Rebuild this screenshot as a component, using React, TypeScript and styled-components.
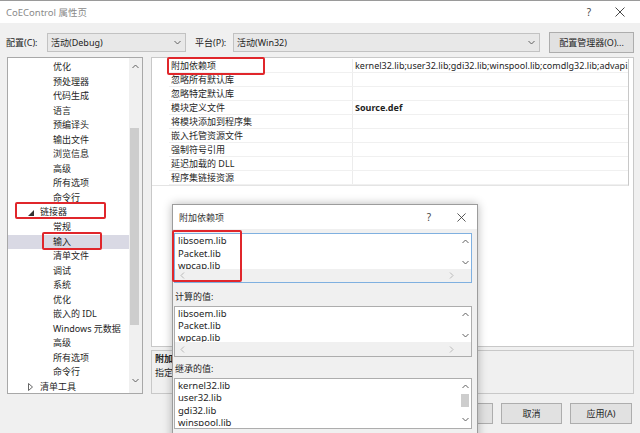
import styled, { createGlobalStyle } from 'styled-components'

const GlobalStyle = createGlobalStyle`
  html, body { margin: 0; padding: 0; background: #f0f0f0; }
  body {
    font-family: "Noto Sans", "Noto Sans CJK SC", sans-serif;
    color: #1e1e1e;
  }
  * { box-sizing: border-box; }
`

type TreeItem = { label: string; level: 1 | 2; expanded?: boolean; collapsed?: boolean; selected?: boolean; mark?: 'linker' | 'input' }

const treeItems: TreeItem[] = [
  { label: '优化', level: 2 },
  { label: '预处理器', level: 2 },
  { label: '代码生成', level: 2 },
  { label: '语言', level: 2 },
  { label: '预编译头', level: 2 },
  { label: '输出文件', level: 2 },
  { label: '浏览信息', level: 2 },
  { label: '高级', level: 2 },
  { label: '所有选项', level: 2 },
  { label: '命令行', level: 2 },
  { label: '链接器', level: 1, expanded: true, mark: 'linker' },
  { label: '常规', level: 2 },
  { label: '输入', level: 2, selected: true, mark: 'input' },
  { label: '清单文件', level: 2 },
  { label: '调试', level: 2 },
  { label: '系统', level: 2 },
  { label: '优化', level: 2 },
  { label: '嵌入的 IDL', level: 2 },
  { label: 'Windows 元数据', level: 2 },
  { label: '高级', level: 2 },
  { label: '所有选项', level: 2 },
  { label: '命令行', level: 2 },
  { label: '清单工具', level: 1, collapsed: true },
]

const gridRows: { name: string; value?: string; bold?: boolean; mark?: boolean }[] = [
  { name: '附加依赖项', value: 'kernel32.lib;user32.lib;gdi32.lib;winspool.lib;comdlg32.lib;advapi32.lib;shell32.lib;ole32.lib', mark: true },
  { name: '忽略所有默认库' },
  { name: '忽略特定默认库' },
  { name: '模块定义文件', value: 'Source.def', bold: true },
  { name: '将模块添加到程序集' },
  { name: '嵌入托管资源文件' },
  { name: '强制符号引用' },
  { name: '延迟加载的 DLL' },
  { name: '程序集链接资源' },
]

function Chevron({ dir, color = '#606060' }: { dir: 'up' | 'down' | 'left' | 'right'; color?: string }) {
  const pts = {
    up: '0.5,4 3.5,1 6.5,4',
    down: '0.5,1 3.5,4 6.5,1',
    left: '4,0.5 1,3.5 4,6.5',
    right: '1,0.5 4,3.5 1,6.5',
  }[dir]
  const vertical = dir === 'up' || dir === 'down'
  return (
    <svg width={vertical ? 7 : 5} height={vertical ? 5 : 7} viewBox={vertical ? '0 0 7 5' : '0 0 5 7'}>
      <polyline points={pts} fill="none" stroke={color} strokeWidth="1" />
    </svg>
  )
}

function CloseGlyph({ size = 10 }: { size?: number }) {
  return (
    <svg width={size} height={size} viewBox="0 0 10 10">
      <path d="M0.5 0.5 L9.5 9.5 M9.5 0.5 L0.5 9.5" stroke="#333" strokeWidth="0.9" fill="none" />
    </svg>
  )
}

export default function App() {
  return (
    <>
      <GlobalStyle />
      <Window>
        <TitleBar>
          <TitleText>CoEControl 属性页</TitleText>
          <TitleButtons>
            <HelpGlyph>?</HelpGlyph>
            <CloseGlyph />
          </TitleButtons>
        </TitleBar>

        <ConfigRow>
          <FieldLabel $width={41}>配置(C):</FieldLabel>
          <Combo $width={139}>
            <span>活动(Debug)</span>
            <Chevron dir="down" />
          </Combo>
          <FieldLabel $width={38} $gap={9}>平台(P):</FieldLabel>
          <Combo $grow>
            <span>活动(Win32)</span>
            <Chevron dir="down" />
          </Combo>
          <PushButton $width={85} $gap={9}>配置管理器(O)...</PushButton>
        </ConfigRow>

        <Main>
          <Tree>
            <TreeList>
              {treeItems.map((item, i) => (
                <TreeRow key={i} $selected={item.selected}>
                  <TreeRowInner $level={item.level}>
                    {item.expanded && (
                      <Twisty>
                        <svg width="6" height="6" viewBox="0 0 6 6"><polygon points="6,0 6,6 0,6" fill="#333" /></svg>
                      </Twisty>
                    )}
                    {item.collapsed && (
                      <Twisty>
                        <svg width="5" height="8" viewBox="0 0 5 8"><polygon points="0.5,0.5 4.5,4 0.5,7.5" fill="none" stroke="#555" strokeWidth="0.9" /></svg>
                      </Twisty>
                    )}
                    {item.label}
                  </TreeRowInner>
                  {item.mark === 'linker' && <RedMark $left={7} $top={-3} $width={91} $height={17} />}
                  {item.mark === 'input' && <RedMark $left={34} $top={-3} $width={60} $height={18} />}
                </TreeRow>
              ))}
            </TreeList>
            <VScroll $thumbTop={70} $thumbHeight={197}>
              <Chevron dir="up" />
              <Chevron dir="down" />
            </VScroll>
          </Tree>

          <RightColumn>
            <Grid>
              <GridRows>
                {gridRows.map((row, i) => (
                  <GridRow key={i}>
                    <NameCell>
                      {row.name}
                      {row.mark && <RedMark $left={-2} $top={-2} $width={98} $height={18} />}
                    </NameCell>
                    <ValueCell $bold={row.bold}>{row.value}</ValueCell>
                  </GridRow>
                ))}
              </GridRows>
            </Grid>
            <DescPane>
              <DescTitle>附加依赖项</DescTitle>
              <DescText>指定要添加到链接命令行的附加项。</DescText>
            </DescPane>
          </RightColumn>
        </Main>

        <ButtonRow>
          <PushButton $width={61}>确定</PushButton>
          <PushButton $width={61}>取消</PushButton>
          <PushButton $width={62}>应用(A)</PushButton>
        </ButtonRow>

        <SubDialog>
          <SubTitleBar>
            <SubTitleText>附加依赖项</SubTitleText>
            <SubTitleButtons>
              <HelpGlyph>?</HelpGlyph>
              <CloseGlyph size={9} />
            </SubTitleButtons>
          </SubTitleBar>
          <SubBody>
            <ListBox $focused $height={50}>
              <ListMain>
                <ListLines $height={35} $lineHeight={12.5}>
                  <div>libsoem.lib</div>
                  <div>Packet.lib</div>
                  <div>wpcap.lib</div>
                </ListLines>
                <BoxVScroll>
                  <Chevron dir="up" />
                  <Chevron dir="down" />
                </BoxVScroll>
              </ListMain>
              <HScroll>
                <Chevron dir="left" color="#b8b8b8" />
                <Chevron dir="right" color="#b8b8b8" />
              </HScroll>
              <RedMark $left={-3} $top={-4} $width={70} $height={52} />
            </ListBox>

            <SectionLabel $height={23} $pad={8}>计算的值:</SectionLabel>
            <ListBox $height={51}>
              <ListMain>
                <ListLines $height={35} $lineHeight={12}>
                  <div>libsoem.lib</div>
                  <div>Packet.lib</div>
                  <div>wpcap.lib</div>
                </ListLines>
                <BoxVScroll>
                  <Chevron dir="up" />
                  <Chevron dir="down" />
                </BoxVScroll>
              </ListMain>
              <HScroll>
                <Chevron dir="left" color="#b8b8b8" />
                <Chevron dir="right" color="#b8b8b8" />
              </HScroll>
            </ListBox>

            <SectionLabel $height={21} $pad={6}>继承的值:</SectionLabel>
            <ListBox $height={51}>
              <ListMain>
                <ListLines $height={47} $lineHeight={12.4}>
                  <div>kernel32.lib</div>
                  <div>user32.lib</div>
                  <div>gdi32.lib</div>
                  <div>winspool.lib</div>
                </ListLines>
                <BoxVScroll $thumb>
                  <Chevron dir="up" />
                  <Chevron dir="down" />
                </BoxVScroll>
              </ListMain>
            </ListBox>
          </SubBody>
        </SubDialog>
      </Window>
    </>
  )
}

const Window = styled.div`
  position: relative;
  width: 640px;
  height: 433px;
  overflow: hidden;
  background: #f0f0f0;
  border-top: 1px solid #9a9a9a;
  font-size: 9px;
`

const TitleBar = styled.div`
  height: 22px;
  background: #ffffff;
  display: flex;
  align-items: center;
  justify-content: space-between;
  padding: 0 15px 0 6px;
`

const TitleText = styled.div`
  color: #8a8a8a;
  font-size: 9.5px;
`

const TitleButtons = styled.div`
  display: flex;
  align-items: center;
  gap: 24px;
`

const HelpGlyph = styled.span`
  font-size: 10px;
  color: #444;
`

const ConfigRow = styled.div`
  display: flex;
  align-items: center;
  height: 34px;
  padding: 9px 6px 5px 6px;
`

const FieldLabel = styled.div<{ $width: number; $gap?: number }>`
  width: ${({ $width }) => $width}px;
  margin-left: ${({ $gap }) => $gap ?? 0}px;
  font-size: 9px;
  color: #1e1e1e;
  white-space: nowrap;
`

const Combo = styled.div<{ $width?: number; $grow?: boolean }>`
  ${({ $width }) => ($width ? `width: ${$width}px;` : '')}
  ${({ $grow }) => ($grow ? 'flex: 1;' : '')}
  height: 19px;
  display: flex;
  align-items: center;
  justify-content: space-between;
  padding: 0 4px 0 3px;
  background: #e8e8e8;
  border: 1px solid #c2c2c2;
  font-size: 9px;
`

const PushButton = styled.div<{ $width: number; $gap?: number }>`
  width: ${({ $width }) => $width}px;
  margin-left: ${({ $gap }) => $gap ?? 0}px;
  flex-shrink: 0;
  height: 21px;
  display: flex;
  align-items: center;
  justify-content: center;
  background: #e1e1e1;
  border: 1px solid #adadad;
  font-size: 9px;
  white-space: nowrap;
`

const Main = styled.div`
  display: flex;
  gap: 8px;
  height: 337px;
  padding: 0 6px 0 7px;
`

const Tree = styled.div`
  width: 136px;
  flex-shrink: 0;
  height: 100%;
  display: flex;
  background: #ffffff;
  border: 1px solid #a8a8a8;
`

const TreeList = styled.div`
  flex: 1;
  padding-top: 2px;
  overflow: hidden;
`

const TreeRow = styled.div<{ $selected?: boolean }>`
  position: relative;
  height: 14.55px;
  line-height: 14.55px;
  background: ${({ $selected }) => ($selected ? '#d9d9e4' : 'transparent')};
  white-space: nowrap;
`

const TreeRowInner = styled.div<{ $level: 1 | 2 }>`
  position: relative;
  padding-left: ${({ $level }) => ($level === 1 ? 32 : 45)}px;
`

const Twisty = styled.span`
  position: absolute;
  left: 20px;
  top: 0;
  height: 100%;
  display: flex;
  align-items: center;
`

const RedMark = styled.div<{ $left: number; $top: number; $width: number; $height: number }>`
  position: absolute;
  left: ${({ $left }) => $left}px;
  top: ${({ $top }) => $top}px;
  width: ${({ $width }) => $width}px;
  height: ${({ $height }) => $height}px;
  border: 2px solid #e0262b;
  border-radius: 2px;
  pointer-events: none;
`

const VScroll = styled.div<{ $thumbTop: number; $thumbHeight: number }>`
  position: relative;
  width: 13px;
  background: #f0f0f0;
  display: flex;
  flex-direction: column;
  align-items: center;
  justify-content: space-between;
  padding: 6px 0 10px;
  &::after {
    content: '';
    position: absolute;
    left: 1px;
    right: 3px;
    top: ${({ $thumbTop }) => $thumbTop}px;
    height: ${({ $thumbHeight }) => $thumbHeight}px;
    background: #cdcdcd;
  }
`

const RightColumn = styled.div`
  flex: 1;
  min-width: 0;
  display: flex;
  flex-direction: column;
  gap: 3px;
`

const Grid = styled.div`
  height: 290px;
  background: #ffffff;
  border: 1px solid #c8c8c8;
  padding: 1px 4px 0 0;
`

const GridRows = styled.div`
  border-right: 1px solid #c8c8c8;
  border-bottom: 1px solid #e4e4e4;
  padding-left: 17px;
`

const GridRow = styled.div`
  display: flex;
  height: 14px;
  line-height: 14px;
  border-bottom: 1px solid #f0f0f0;
`

const NameCell = styled.div`
  position: relative;
  width: 184px;
  flex-shrink: 0;
  padding-left: 2px;
  border-right: 1px solid #ececec;
  white-space: nowrap;
`

const ValueCell = styled.div<{ $bold?: boolean }>`
  flex: 1;
  min-width: 0;
  padding-left: 2px;
  overflow: hidden;
  white-space: nowrap;
  font-size: 9px;
  font-weight: ${({ $bold }) => ($bold ? 700 : 400)};
`

const DescPane = styled.div`
  height: 44px;
  border: 1px solid #c8c8c8;
  background: #f0f0f0;
  padding: 1px 3px;
  line-height: 14px;
  overflow: hidden;
`

const DescTitle = styled.div`
  font-weight: 700;
`

const DescText = styled.div``

const ButtonRow = styled.div`
  display: flex;
  justify-content: flex-end;
  gap: 8px;
  margin-top: 9px;
  padding-right: 8px;
`

const SubDialog = styled.div`
  position: absolute;
  left: 172px;
  top: 203px;
  width: 306px;
  height: 240px;
  background: #f0f0f0;
  border: 1px solid #9c9c9c;
  box-shadow: 0 0 9px rgba(0, 0, 0, 0.28);
`

const SubTitleBar = styled.div`
  height: 24px;
  background: #ffffff;
  display: flex;
  align-items: center;
  justify-content: space-between;
  padding: 0 11px 0 6px;
`

const SubTitleText = styled.div`
  font-size: 9px;
  color: #333;
`

const SubTitleButtons = styled.div`
  display: flex;
  align-items: center;
  gap: 26px;
`

const SubBody = styled.div`
  padding: 4px 5px 0 1px;
`

const ListBox = styled.div<{ $focused?: boolean; $height: number }>`
  position: relative;
  height: ${({ $height }) => $height}px;
  background: #ffffff;
  border: 1px solid ${({ $focused }) => ($focused ? '#7fb0e0' : '#adadad')};
  display: flex;
  flex-direction: column;
  font-size: 9.5px;
`

const ListMain = styled.div`
  display: flex;
`

const ListLines = styled.div<{ $height: number; $lineHeight: number }>`
  flex: 1;
  height: ${({ $height }) => $height}px;
  line-height: ${({ $lineHeight }) => $lineHeight}px;
  padding: 1px 0 0 3px;
  overflow: hidden;
  color: #1e1e1e;
`

const BoxVScroll = styled.div<{ $thumb?: boolean }>`
  position: relative;
  width: 12px;
  display: flex;
  flex-direction: column;
  align-items: center;
  justify-content: space-between;
  padding: 5px 0 4px;
  ${({ $thumb }) =>
    $thumb
      ? `&::after {
    content: '';
    position: absolute;
    left: 2px;
    right: 2px;
    top: 15px;
    height: 13px;
    background: #cdcdcd;
  }`
      : ''}
`

const HScroll = styled.div`
  flex: 1;
  display: flex;
  align-items: center;
  justify-content: space-between;
  padding: 0 17px 0 5px;
  background: #f0f0f0;
`

const SectionLabel = styled.div<{ $height: number; $pad: number }>`
  height: ${({ $height }) => $height}px;
  padding-top: ${({ $pad }) => $pad}px;
  line-height: 12px;
  padding-left: 1px;
  font-size: 9px;
`
